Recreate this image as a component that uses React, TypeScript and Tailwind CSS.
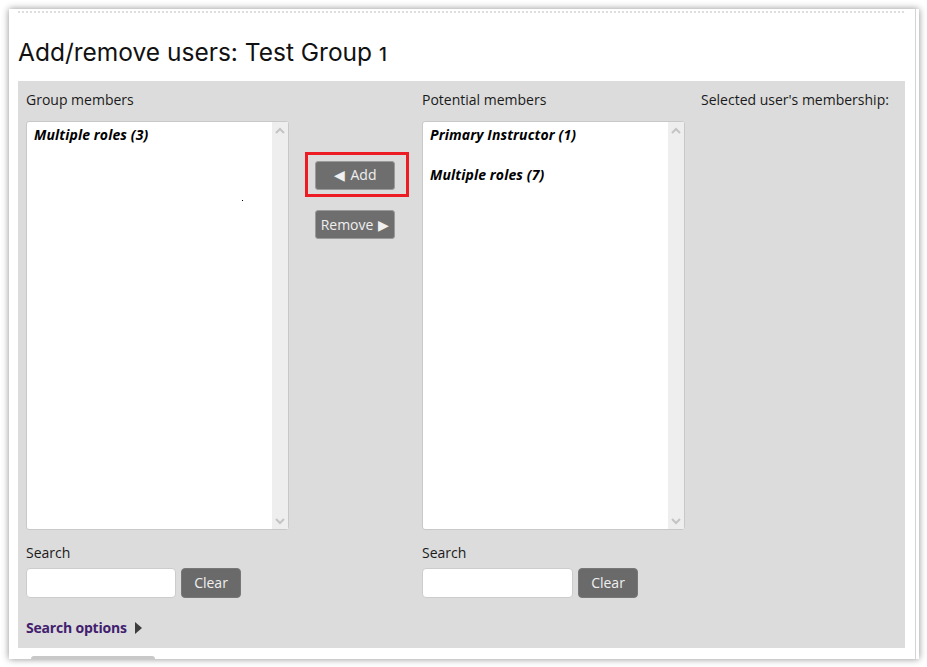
import React from 'react';

const font = { sans: "font-['Open_Sans',sans-serif]" };

function Chevron({ up }: { up?: boolean }) {
  return (
    <svg width="10" height="7" viewBox="0 0 10 7" fill="none" stroke="#c4c4c4" strokeWidth="2">
      <path d={up ? 'M1 6 L5 2 L9 6' : 'M1 1 L5 5 L9 1'} />
    </svg>
  );
}

function ListBox({ groups, dot }: { groups: string[]; dot?: boolean }) {
  return (
    <div className="relative flex h-[409px] w-[263px] rounded-[3px] border border-[#c8c8c8] bg-white">
      <div className="flex-1 pl-[7px] pt-[3px]">
        {groups.map((g) => (
          <div key={g} className="mb-[20px] h-[20px] text-[14px] leading-[20px] font-bold italic tracking-[0.12px] text-black">{g}</div>
        ))}
      </div>
      <div className="flex w-[16px] flex-col items-center justify-between bg-[#eeeeee] pt-[5px] pb-[4px]">
        <Chevron up />
        <Chevron />
      </div>
      {dot && <div className="absolute left-[215px] top-[78px] h-px w-px bg-black" />}
    </div>
  );
}

function SearchRow({ inputW, gap }: { inputW: string; gap: string }) {
  return (
    <div>
      <div className="mt-[13px] h-[20px] text-[14px] leading-[20px] text-[#1a1a1a]">Search</div>
      <div className={`mt-[5px] flex ${gap}`}>
        <input className={`h-[30px] ${inputW} rounded-[4px] border border-[#cccccc] bg-white`} />
        <button className="h-[30px] w-[60px] rounded-[4px] border border-[#777] bg-[#6a6a6a] pb-[2px] text-[14px] text-[#f0f0f0]">Clear</button>
      </div>
    </div>
  );
}

export default function App() {
  return (
    <div className={`h-[667px] w-[927px] overflow-hidden bg-white px-[9px] pt-[9px] ${font.sans}`}>
      <div className="h-[650px] w-[910px] overflow-hidden bg-white shadow-[0_0_7px_rgba(0,0,0,0.45)]">
        <div className="h-full w-[907px] border-r border-[#d4d4d4] pl-[9px] pt-[2px]">
          <div className="w-[886px] border-t-2 border-dotted border-[#dddddd]" />
          <h2 className="mt-[24px] h-[44px] font-['Inter',sans-serif] text-[24.5px] leading-[30px] text-[#111111]">
            Add/remove users: Test Group <span className="text-[19px] font-medium">1</span>
          </h2>
          <div className="h-[567px] w-[887px] bg-[#dcdcdc] pl-[8px] pt-[9px]">
            <div className="flex">
              <div className="w-[263px]">
                <div className="mb-[11px] h-[20px] text-[14px] leading-[20px] text-[#1a1a1a]">Group members</div>
                <ListBox groups={['Multiple roles (3)']} dot />
                <SearchRow inputW="w-[150px]" gap="gap-[5px]" />
              </div>
              <div className="w-[133px] pl-[26px] pt-[71px]">
                <div className="relative w-[80px]">
                  <button className="h-[29px] w-[80px] rounded-[3px] border border-[#9a9a9a] bg-[#6e6e6e] pb-[2px] text-[14px] text-[#f0f0f0]">◀<span className="ml-[6px]">Add</span></button>
                  <div className="absolute -left-[10px] -top-[9px] h-[45px] w-[104px] border-[3px] border-[#ed1c24]" />
                  <button className="mt-[20px] h-[29px] w-[80px] rounded-[3px] border border-[#9a9a9a] bg-[#6e6e6e] pb-[1px] text-[14px] whitespace-nowrap text-[#f0f0f0]">Remove<span className="ml-[5px]">▶</span></button>
                </div>
              </div>
              <div className="w-[279px]">
                <div className="mb-[11px] h-[20px] text-[14px] leading-[20px] text-[#1a1a1a]">Potential members</div>
                <ListBox groups={['Primary Instructor (1)', 'Multiple roles (7)']} />
                <SearchRow inputW="w-[151px]" gap="gap-[5px]" />
              </div>
              <div className="h-[20px] text-[14px] leading-[20px] whitespace-nowrap text-[#1a1a1a]">Selected user's membership:</div>
            </div>
            <div className="mt-[20px] flex h-[20px] items-center gap-[8px]">
              <span className="text-[14px] leading-[20px] font-bold tracking-[-0.2px] text-[#41206e]">Search options</span>
              <svg width="8" height="12" viewBox="0 0 8 12"><path d="M0 0 L7 6 L0 12 Z" fill="#3c3c3c" /></svg>
            </div>
          </div>
          <div className="ml-[13px] mt-[8px] h-[10px] w-[124px] rounded-t-[3px] bg-[#c8c8c8]" />
        </div>
      </div>
    </div>
  );
}
